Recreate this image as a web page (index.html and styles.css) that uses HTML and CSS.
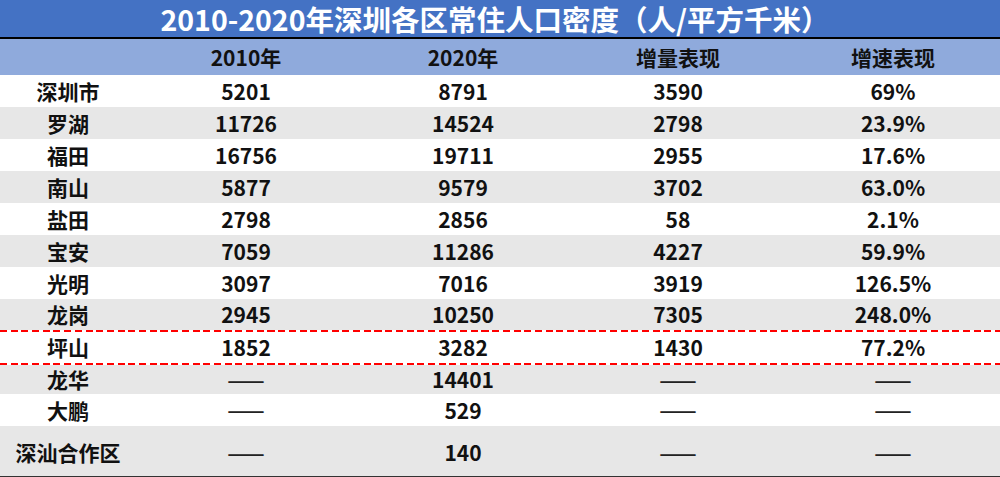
FILE: index.html
```html
<!DOCTYPE html>
<html lang="zh-CN">
<head>
<meta charset="utf-8">
<title>2010-2020年深圳各区常住人口密度</title>
<link rel="stylesheet" href="styles.css">
</head>
<body>
<div class="sheet">
  <div class="title">2010-2020年深圳各区常住人口密度（人/平方千米）</div>
  <div class="row head">
    <div></div><div>2010年</div><div>2020年</div><div>增量表现</div><div>增速表现</div>
  </div>
  <div class="row">
    <div>深圳市</div><div>5201</div><div>8791</div><div>3590</div><div>69%</div>
  </div>
  <div class="row alt">
    <div>罗湖</div><div>11726</div><div>14524</div><div>2798</div><div>23.9%</div>
  </div>
  <div class="row">
    <div>福田</div><div>16756</div><div>19711</div><div>2955</div><div>17.6%</div>
  </div>
  <div class="row alt">
    <div>南山</div><div>5877</div><div>9579</div><div>3702</div><div>63.0%</div>
  </div>
  <div class="row">
    <div>盐田</div><div>2798</div><div>2856</div><div>58</div><div>2.1%</div>
  </div>
  <div class="row alt">
    <div>宝安</div><div>7059</div><div>11286</div><div>4227</div><div>59.9%</div>
  </div>
  <div class="row">
    <div>光明</div><div>3097</div><div>7016</div><div>3919</div><div>126.5%</div>
  </div>
  <div class="row alt r31">
    <div>龙岗</div><div>2945</div><div>10250</div><div>7305</div><div>248.0%</div>
  </div>
  <div class="dash"></div>
  <div class="row r31">
    <div>坪山</div><div>1852</div><div>3282</div><div>1430</div><div>77.2%</div>
  </div>
  <div class="dash"></div>
  <div class="row alt r29">
    <div>龙华</div><div class="nil">——</div><div>14401</div><div class="nil">——</div><div class="nil">——</div>
  </div>
  <div class="row">
    <div>大鹏</div><div class="nil">——</div><div>529</div><div class="nil">——</div><div class="nil">——</div>
  </div>
  <div class="row alt last">
    <div>深汕合作区</div><div class="nil">——</div><div>140</div><div class="nil">——</div><div class="nil">——</div>
  </div>
</div>
</body>
</html>
```

FILE: styles.css
```css
html, body {
  margin: 0;
  padding: 0;
  background: #ffffff;
}
body {
  width: 1000px;
  height: 477px;
  overflow: hidden;
  font-family: "Noto Sans CJK SC", "Noto Sans", sans-serif;
  font-weight: bold;
  color: #111111;
}
.sheet {
  display: flex;
  flex-direction: column;
}
.title {
  height: 37px;
  background: #4472c4;
  color: #ffffff;
  font-size: 28.5px;
  line-height: 37px;
  text-align: center;
  padding-right: 10px;
  border-bottom: 2px solid #000000;
  white-space: nowrap;
}
.row {
  display: grid;
  grid-template-columns: 136px 220px 214px 216px 214px;
  height: 32px;
  align-items: center;
  font-size: 21px;
  line-height: 1;
}
.row > div {
  text-align: center;
}
.row > .nil {
  font-size: 20px;
  letter-spacing: 0;
  transform: scaleX(1.1);
  color: #222222;
}
.row.head {
  height: 36px;
  background: #8faadc;
}
.row.alt {
  background: #e7e7e7;
}
.row.r31 {
  height: 31px;
}
.row.r29 {
  height: 29px;
}
.row.last {
  height: 51px;
  padding-top: 3px;
  box-sizing: border-box;
  border-bottom: 1px solid #333333;
}
.dash {
  height: 2px;
  background: repeating-linear-gradient(to right, #ff0000 0 7px, transparent 7px 10.7px);
}
```
